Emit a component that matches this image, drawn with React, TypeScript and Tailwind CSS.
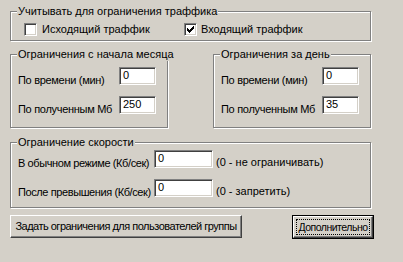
import React from 'react'

const font = { fontFamily: '"Liberation Sans", Arial, sans-serif' }

function Group({ title, className, children }: any) {
  return (
    <fieldset className={`border border-[#808080] shadow-[inset_1px_1px_0_#fff,1px_1px_0_#fff] min-w-0 ${className}`}>
      <legend className="ml-[6px] px-[1px] leading-[13px] bg-[#d4d0c8] whitespace-nowrap">{title}</legend>
      {children}
    </fieldset>
  )
}

function Edit({ value, className }: any) {
  return (
    <div className={`h-[18px] shrink-0 bg-white border-t border-l border-[#808080] border-r border-b border-r-white border-b-white shadow-[inset_1px_1px_0_#404040,inset_-1px_-1px_0_#d4d0c8] pl-[3px] pt-[1px] leading-[13px] ${className}`}>
      {value}
    </div>
  )
}

function Check({ checked }: { checked?: boolean }) {
  return (
    <div className="w-[13px] h-[13px] shrink-0 bg-white border-t border-l border-[#808080] border-r border-b border-r-white border-b-white shadow-[inset_1px_1px_0_#404040,inset_-1px_-1px_0_#d4d0c8] flex items-center justify-center">
      {checked && (
        <svg width="7" height="7" viewBox="0 0 7 7">
          <path d="M0 2h1v1h1v1h1v-1h1v-1h1v-1h1v-1h1v3h-1v1h-1v1h-1v1h-1v1h-1v-1h-1v-1h-1z" fill="#000" />
        </svg>
      )}
    </div>
  )
}

function LimitRow({ label, value, mt }: any) {
  return (
    <div className={`flex items-end ${mt}`}>
      <span className="w-[108px] shrink-0 pl-[7px] leading-[13px] -mb-[2px] whitespace-nowrap tracking-[-0.3px]">{label}</span>
      <Edit value={value} className="w-[37px]" />
    </div>
  )
}

export default function App() {
  return (
    <div style={font} className="w-[403px] h-[262px] bg-[#d4d0c8] text-black text-[11px] pl-[10px] pt-[5px] flex flex-col">
      <Group title="Учитывать для ограничения траффика" className="w-[361px] h-[36px]">
        <div className="flex items-center mt-[5px] pl-[13px]">
          <Check />
          <span className="ml-[5px] w-[142px] leading-[13px] whitespace-nowrap">Исходящий траффик</span>
          <Check checked />
          <span className="ml-[4px] leading-[13px] whitespace-nowrap">Входящий траффик</span>
        </div>
      </Group>

      <div className="flex gap-[45px] mt-[7px]">
        <Group title="Ограничения с начала месяца" className="w-[158px] h-[80px]">
          <LimitRow label="По времени (мин)" value="0" mt="mt-[6px]" />
          <LimitRow label="По полученным Мб" value="250" mt="mt-[11px]" />
        </Group>
        <Group title="Ограничения за день" className="w-[158px] h-[80px]">
          <LimitRow label="По времени (мин)" value="0" mt="mt-[6px]" />
          <LimitRow label="По полученным Мб" value="35" mt="mt-[11px]" />
        </Group>
      </div>

      <Group title="Ограничение скорости" className="w-[361px] h-[72px] mt-[8px]">
        <div className="flex items-end mt-[1px]">
          <span className="w-[143px] shrink-0 pl-[7px] leading-[13px] -mb-[2px] whitespace-nowrap tracking-[-0.4px]">В обычном режиме (Кб/сек)</span>
          <Edit value="0" className="w-[59px]" />
          <span className="ml-[3px] leading-[13px] -mb-[1px] whitespace-nowrap">(0 - не ограничивать)</span>
        </div>
        <div className="flex items-end mt-[11px]">
          <span className="w-[143px] shrink-0 pl-[7px] leading-[13px] -mb-[2px] whitespace-nowrap tracking-[-0.4px]">После превышения (Кб/сек)</span>
          <Edit value="0" className="w-[59px]" />
          <span className="ml-[3px] leading-[13px] -mb-[1px] whitespace-nowrap">(0 - запретить)</span>
        </div>
      </Group>

      <div className="flex mt-[7px]">
        <button className="w-[232px] h-[23px] bg-[#d4d0c8] border border-t-white border-l-white border-r-[#404040] border-b-[#404040] shadow-[inset_-1px_-1px_0_#808080] text-[11px] leading-[13px] whitespace-nowrap tracking-[-0.5px]">
          Задать ограничения для пользователей группы
        </button>
        <button className="ml-[50px] w-[82px] h-[24px] bg-[#d4d0c8] border border-black p-0">
          <div className="h-full border border-t-white border-l-white border-r-[#404040] border-b-[#404040] shadow-[inset_-1px_-1px_0_#808080] p-[2px]">
            <div className="h-full border border-dotted border-black flex items-center justify-center leading-[13px] whitespace-nowrap text-[10.5px] tracking-[-0.5px]">
              Дополнительно
            </div>
          </div>
        </button>
      </div>
    </div>
  )
}
